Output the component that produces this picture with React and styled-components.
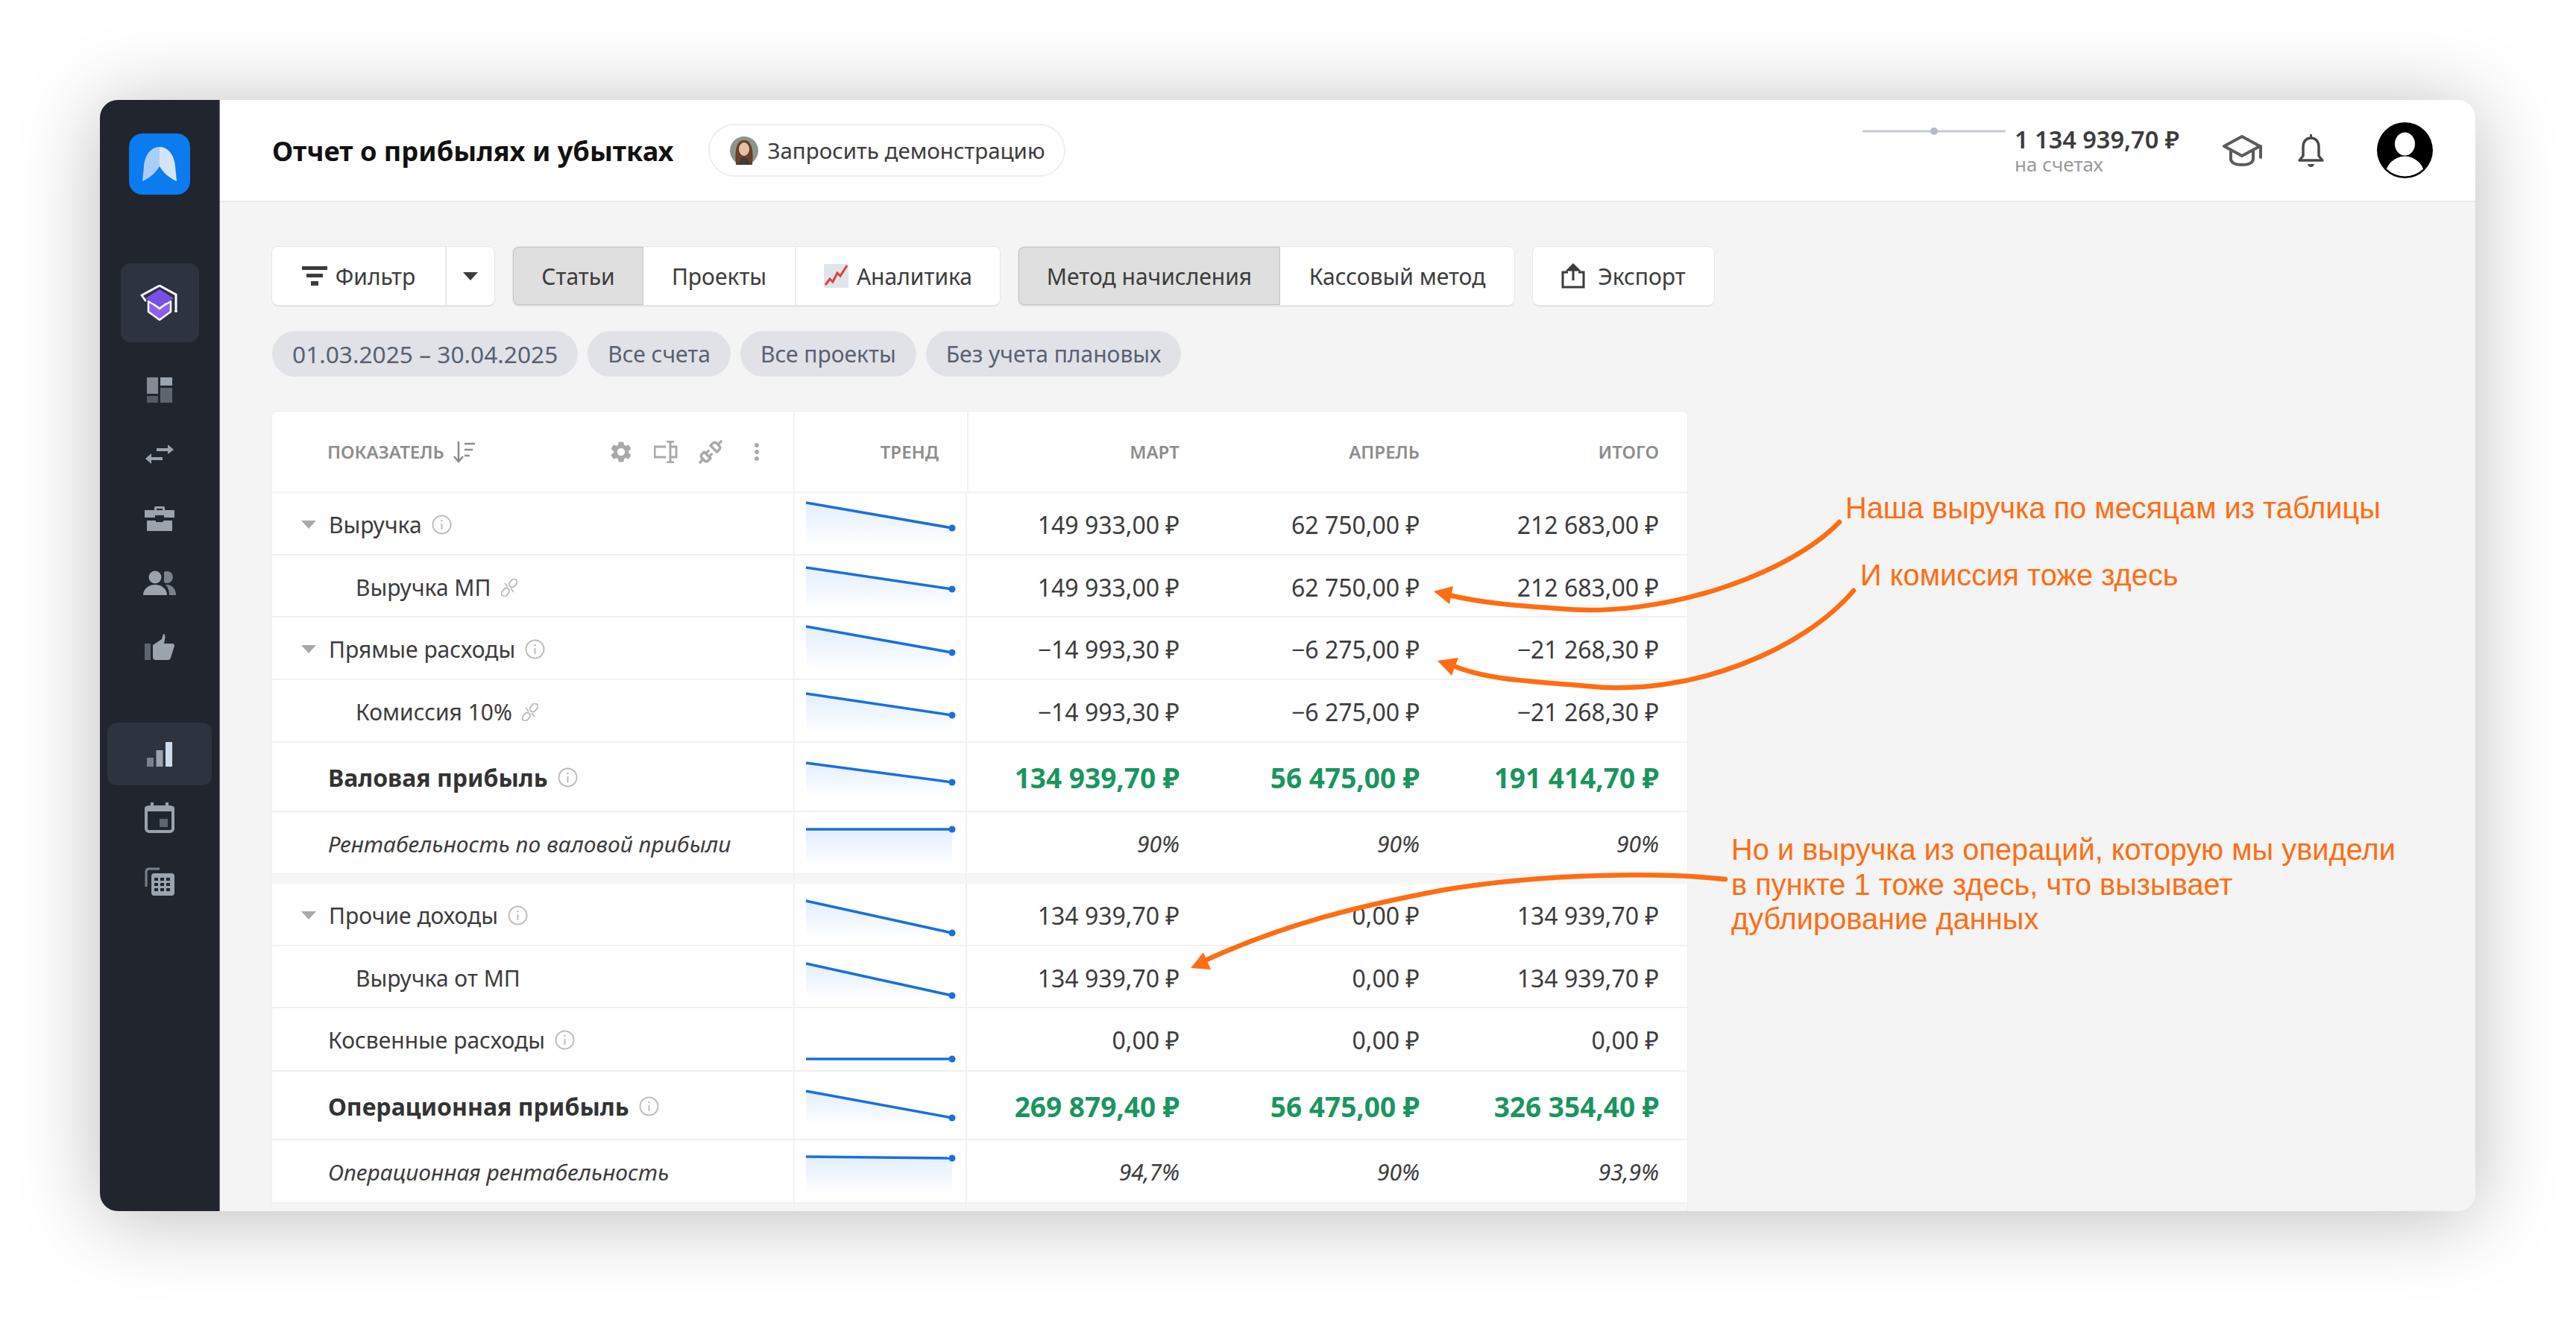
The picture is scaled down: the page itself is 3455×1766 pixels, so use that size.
import React from "react";
import styled, { createGlobalStyle } from "styled-components";
import { MdSettings, MdMoreVert } from "react-icons/md";
import { Unplug } from "lucide-react";

const GlobalStyle = createGlobalStyle`
  html, body { margin: 0; padding: 0; background: #fff; }
  body { font-family: "Noto Sans", "Open Sans", sans-serif; color: #3c3c3c; }
  * { box-sizing: border-box; }
`;

const Page = styled.div`
  position: relative;
  width: 3455px;
  height: 1766px;
  padding: 134px 135px 142px 134px;
  overflow: hidden;
  background: #fff;
`;

const Window = styled.div`
  display: flex;
  height: 100%;
  border-radius: 24px;
  overflow: hidden;
  background: #f4f4f4;
  box-shadow: 0 8px 110px rgba(0, 0, 0, 0.27);
`;

const MainColumn = styled.div`
  display: flex;
  flex: 1;
  min-width: 0;
  flex-direction: column;
`;

/* ---------- sidebar ---------- */

const Sidebar = styled.aside`
  flex: 0 0 161px;
  display: flex;
  flex-direction: column;
  align-items: center;
  padding-top: 45px;
  background: #21252d;
  border-right: 1px solid #6d727a;
`;

const LogoBox = styled.div`
  width: 82px;
  height: 82px;
  margin-bottom: 92px;
  display: flex;
  align-items: center;
  justify-content: center;
  border-radius: 18px;
  background: #0b7bf0;
`;

const LearnBox = styled.div`
  width: 105px;
  height: 106px;
  margin-bottom: 21px;
  display: flex;
  align-items: center;
  justify-content: center;
  border-radius: 13px;
  background: #2e3340;
`;

const NavItem = styled.div`
  width: 140px;
  height: ${(p) => (p.$active ? "84px" : "86px")};
  display: flex;
  align-items: center;
  justify-content: center;
  border-radius: 12px;
  background: ${(p) => (p.$active ? "#2e3340" : "transparent")};
`;

const NavSpacer = styled.div`
  height: 59px;
`;

/* ---------- header ---------- */

const Header = styled.header`
  flex: 0 0 137px;
  display: flex;
  align-items: center;
  padding: 0 57px 0 70px;
  background: #fff;
  border-bottom: 2px solid #ebebeb;
`;

const Title = styled.h1`
  margin: 0;
  font-size: 36.2px;
  font-weight: 700;
  color: #111;
  white-space: nowrap;
`;

const DemoPill = styled.div`
  width: 479px;
  height: 71px;
  margin-left: 47px;
  display: flex;
  align-items: center;
  gap: 12px;
  padding-left: 27px;
  border: 2px solid #eeeeee;
  border-radius: 36px;
  font-size: 29.5px;
  color: #3c3c3c;
  white-space: nowrap;
`;

const Balance = styled.div`
  margin-left: auto;
  display: flex;
  align-items: center;
  gap: 12px;
`;

const BalanceSpark = styled.svg`
  width: 192px;
  height: 12px;
  margin-bottom: 52px;
`;

const BalanceText = styled.div`
  width: 222px;
  display: flex;
  flex-direction: column;
`;

const BalanceValue = styled.span`
  font-size: 32.5px;
  line-height: 36px;
  font-weight: 600;
  color: #3c3c3c;
  white-space: nowrap;
`;

const BalanceNote = styled.span`
  font-size: 26px;
  line-height: 30px;
  color: #9a9a9a;
`;

const HeaderIcon = styled.div`
  margin-left: ${(p) => p.$gap}px;
  display: flex;
`;

/* ---------- content ---------- */

const Content = styled.main`
  flex: 1;
  min-height: 0;
  padding: 60px 0 0 70px;
  overflow: hidden;
`;

const Toolbar = styled.div`
  display: flex;
  gap: 25px;
`;

const BtnGroup = styled.div`
  height: 78px;
  display: flex;
  border-radius: 8px;
  background: #fff;
  box-shadow: 0 0 0 1px #e6e6e6, 0 2px 0 #dcdcdc;
`;

const Seg = styled.div`
  width: ${(p) => p.$w}px;
  display: flex;
  align-items: center;
  justify-content: center;
  gap: ${(p) => p.$gap || 11}px;
  font-size: 30px;
  color: #3c3c3c;
  white-space: nowrap;
  background: ${(p) => (p.$on ? "#dfdfdf" : "transparent")};
  border-left: ${(p) => (p.$sep ? "2px solid #eaeaea" : "none")};
  box-shadow: ${(p) => (p.$on ? "inset 0 0 0 1px #c4c4c4" : "none")};
  &:first-child { border-radius: 8px 0 0 8px; }
  &:last-child { border-radius: 0 8px 8px 0; }
`;

const Chips = styled.div`
  display: flex;
  gap: 13px;
  margin-top: 35px;
`;

const Chip = styled.div`
  height: 61px;
  display: flex;
  align-items: center;
  padding: 0 27px;
  border-radius: 31px;
  background: #e0e2e7;
  font-size: ${(p) => (p.$dates ? 31.7 : 30)}px;
  color: #596172;
  white-space: nowrap;
`;

const Card = styled.section`
  width: 1898px;
  margin-top: 47px;
  background: #fff;
  border-radius: 6px 6px 0 0;
  box-shadow: 0 0 0 1px #efefef;
`;

const TableRow = styled.div`
  display: grid;
  grid-template-columns: 699px 233px 323px 322px 321px;
  height: ${(p) => p.$h}px;
  border-bottom: 2px solid #f1f1f1;
`;

const Gap = styled.div`
  height: ${(p) => p.$h}px;
  background: #f5f6f7;
`;

const HeadName = styled.div`
  display: flex;
  align-items: center;
  gap: 12px;
  padding-left: 74px;
`;

const HeadText = styled.span`
  font-size: 24px;
  font-weight: 600;
  color: #8d8d8d;
  text-transform: uppercase;
  white-space: nowrap;
`;

const HeadTools = styled.div`
  margin-left: auto;
  display: flex;
  align-items: center;
  gap: 27px;
  padding-right: 31px;
  color: #a9a9a9;
`;

const HeadCell = styled.div`
  display: flex;
  align-items: center;
  justify-content: flex-end;
  padding-right: 38px;
  border-left: ${(p) => (p.$line ? "2px solid #f1f1f1" : "none")};
`;

const NameCell = styled.div`
  display: flex;
  align-items: center;
  padding-left: ${(p) => p.$indent}px;
  padding-bottom: ${(p) => (p.$bold ? 0 : 8)}px;
  font-size: ${(p) => (p.$bold ? 32 : 30)}px;
  font-weight: ${(p) => (p.$bold ? 700 : 400)};
  font-style: ${(p) => (p.$italic ? "italic" : "normal")};
  color: ${(p) => (p.$bold ? "#333" : "#3c3c3c")};
  white-space: nowrap;
`;

const Caret = styled.span`
  width: 0;
  height: 0;
  margin-right: ${(p) => (p.$dark ? 0 : 17)}px;
  border-left: 10px solid transparent;
  border-right: 10px solid transparent;
  border-top: 11px solid ${(p) => (p.$dark ? "#3c3c3c" : "#a9a9a9")};
`;

const InfoWrap = styled.span`
  display: flex;
  margin-left: 13px;
  color: #bdbdbd;
`;

const TrendCell = styled.div`
  border-left: 2px solid #f1f1f1;
  border-right: 2px solid #f1f1f1;
`;

const TrendSvg = styled.svg`
  display: block;
  width: 231px;
  height: 100%;
`;

const ValueCell = styled.div`
  display: flex;
  align-items: center;
  justify-content: flex-end;
  padding-right: 38px;
  padding-bottom: ${(p) => (p.$bold ? 0 : 8)}px;
  font-size: ${(p) => (p.$bold ? 37 : p.$italic ? 30 : 32)}px;
  font-weight: ${(p) => (p.$bold ? 700 : 400)};
  font-style: ${(p) => (p.$italic ? "italic" : "normal")};
  color: ${(p) => (p.$bold ? "#1a9560" : "#3c3c3c")};
  white-space: nowrap;
`;

/* ---------- annotations over the page ---------- */

const ArrowLayer = styled.svg`
  position: absolute;
  left: 0;
  top: 0;
  width: 3455px;
  height: 1766px;
  pointer-events: none;
`;

const Note = styled.div`
  position: absolute;
  left: ${(p) => p.$x}px;
  top: ${(p) => p.$y}px;
  font-family: "Liberation Sans", Arial, sans-serif;
  font-size: 39.8px;
  line-height: 46.5px;
  color: #ff6d12;
  white-space: pre;
`;

/* ---------- icons ---------- */

const LogoIcon = () => (
  <svg width="46" height="46" viewBox="0 0 46 46">
    <path d="M23 0C11 0 3 12 2 26L0 46C9 42 17 36 23 26Z" fill="#a9cdf9" />
    <path d="M23 0C35 0 43 12 44 26L46 46C37 42 29 36 23 26Z" fill="#d3e5fd" />
  </svg>
);

const LearnIcon = () => (
  <svg width="54" height="48" viewBox="0 0 54 48">
    <path d="M12 22V36L27 47L42 36V22L27 31Z" fill="#8c5ff0" stroke="#fff" strokeWidth="2.5" strokeLinejoin="round" />
    <path d="M27 6L46 18L27 30L8 18Z" fill="#7a4fe6" />
    <path d="M8 21L3 14L27 1L49 13V32" fill="none" stroke="#fff" strokeWidth="3" strokeLinejoin="round" strokeLinecap="round" />
    <path d="M19 26L27 32L36 25" fill="none" stroke="#fff" strokeWidth="2.5" />
    <circle cx="49" cy="35" r="2" fill="#fff" />
  </svg>
);

const DashIcon = () => (
  <svg width="34" height="34" viewBox="0 0 34 34">
    <rect width="15" height="22" fill="#858b95" />
    <rect x="18" width="16" height="11" fill="#9aa3ae" />
    <rect y="25" width="15" height="9" fill="#555b66" />
    <rect x="18" y="14" width="16" height="20" fill="#5f6570" />
  </svg>
);

const SwapIcon = () => (
  <svg width="38" height="30" viewBox="0 0 38 30">
    <path d="M15 7H30V2L38 9L30 15V11H15Z" fill="#9aa3ae" />
    <path d="M23 19H8V14L0 21L8 28V23H23Z" fill="#9aa3ae" />
  </svg>
);

const CaseIcon = () => (
  <svg width="40" height="34" viewBox="0 0 40 34">
    <path d="M13 6V3Q13 1 15 1H25Q27 1 27 3V6H24V4H16V6Z" fill="#9aa3ae" />
    <path d="M0 6H40V16H26V13H14V16H0Z" fill="#9aa3ae" />
    <path d="M3 20H15V22H25V20H37V34H3Z" fill="#9aa3ae" />
  </svg>
);

const PeopleIcon = () => (
  <svg width="44" height="33" viewBox="0 0 44 33">
    <path d="M28 2A8 8 0 1 1 28 16Z" fill="#7c828c" />
    <path d="M32 19C38 19 44 24 44 33H35C35 27 33 22 30 19Z" fill="#7c828c" />
    <circle cx="16" cy="9" r="8.5" fill="#9aa3ae" />
    <path d="M0 33C0 25 7 19 16 19C25 19 32 25 32 33Z" fill="#9aa3ae" />
  </svg>
);

const ThumbIcon = () => (
  <svg width="40" height="35" viewBox="0 0 40 35">
    <rect y="13" width="8" height="22" fill="#5f6570" />
    <path d="M11 15L23 7L25 0L27 1Q28 2 27 8L26 13H37Q40 13 40 16L35 32Q34 35 31 35H15Q11 35 11 31Z" fill="#9aa3ae" />
  </svg>
);

const BarsIcon = () => (
  <svg width="34" height="33" viewBox="0 0 34 33">
    <rect y="21" width="9" height="12" fill="#7c828c" />
    <rect x="12.5" y="11" width="9" height="22" fill="#9aa3ae" />
    <rect x="25" width="9" height="33" fill="#cfdcec" />
  </svg>
);

const CalendarIcon = () => (
  <svg width="40" height="42" viewBox="0 0 40 42">
    <rect x="2" y="7" width="36" height="33" rx="4" fill="none" stroke="#9aa3ae" strokeWidth="4" />
    <rect y="6" width="40" height="7" rx="3" fill="#9aa3ae" />
    <rect x="8" y="1" width="4" height="8" fill="#9aa3ae" />
    <rect x="28" y="1" width="4" height="8" fill="#9aa3ae" />
    <rect x="20" y="23" width="11" height="11" fill="#5f6570" />
  </svg>
);

const CalcIcon = () => (
  <svg width="40" height="38" viewBox="0 0 40 38">
    <path d="M2 26V6Q2 2 6 2H20" fill="none" stroke="#7c828c" strokeWidth="3" />
    <rect x="9" y="8" width="31" height="30" rx="4" fill="#9aa3ae" />
    {[14, 21, 28].map((y) =>
      [13, 21, 29].map((x) => <rect key={x + "-" + y} x={x} y={y} width="5" height="4" fill="#21252d" />)
    )}
  </svg>
);

const DemoAvatar = () => (
  <svg width="38" height="38" viewBox="0 0 38 38">
    <circle cx="19" cy="19" r="19" fill="#8d9488" />
    <path d="M8 38C6 18 9 5 19 5C29 5 32 18 30 38Z" fill="#6c3f26" />
    <ellipse cx="19" cy="17" rx="7" ry="9" fill="#e7bfa4" />
    <path d="M11 38Q14 28 19 28Q24 28 27 38Z" fill="#3d3a3a" />
  </svg>
);

const CapIcon = () => (
  <svg width="54" height="42" viewBox="0 0 54 42" fill="none" stroke="#5c5c5c" strokeWidth="4" strokeLinejoin="round" strokeLinecap="round">
    <path d="M26 2L2 15L26 28L50 15Z" />
    <path d="M11 21V33Q13 40 26 40Q39 40 41 33V21" />
    <path d="M51 15V30" />
  </svg>
);

const BellIcon = () => (
  <svg width="37" height="46" viewBox="0 0 37 46" fill="none" stroke="#4a4a4a" strokeWidth="3.5" strokeLinejoin="round">
    <path d="M18.5 6C12 6 8 11 8 18V30L3 36H34L29 30V18C29 11 25 6 18.5 6Z" />
    <rect x="17" y="1" width="3" height="5" fill="#4a4a4a" stroke="none" />
    <path d="M14 41H23Q22 45 18.5 45Q15 45 14 41Z" fill="#4a4a4a" stroke="none" />
  </svg>
);

const UserAvatar = () => (
  <svg width="75" height="75" viewBox="0 0 75 75">
    <defs>
      <clipPath id="avatarClip">
        <circle cx="37.5" cy="37.5" r="35" />
      </clipPath>
    </defs>
    <circle cx="37.5" cy="37.5" r="37.5" fill="#000" />
    <ellipse cx="37.5" cy="29" rx="13.5" ry="15.5" fill="#fff" />
    <ellipse cx="37.5" cy="74" rx="27" ry="28.5" fill="#fff" clipPath="url(#avatarClip)" />
  </svg>
);

const FilterIcon = () => (
  <svg width="34" height="27" viewBox="0 0 34 27" fill="#3c3c3c">
    <rect width="34" height="5" />
    <rect x="6" y="10" width="22" height="5" />
    <rect x="12" y="20" width="10" height="6" />
  </svg>
);

const ChartEmoji = () => (
  <svg width="33" height="32" viewBox="0 0 33 32">
    <rect width="33" height="32" rx="2" fill="#dfe6ea" />
    <path d="M2 28L8 20L12 24L18 12L22 16L31 2" fill="none" stroke="#e0413f" strokeWidth="3" />
  </svg>
);

const ExportIcon = () => (
  <svg width="32" height="34" viewBox="0 0 32 34" fill="none" stroke="#3c3c3c" strokeWidth="3">
    <path d="M9 12H2V32H30V12H23" />
    <path d="M16 23V3" />
    <path d="M9 9L16 2L23 9Z" fill="#3c3c3c" />
  </svg>
);

const SortIcon = () => (
  <svg width="30" height="30" viewBox="0 0 30 30" fill="none" stroke="#8d8d8d" strokeWidth="2.5">
    <path d="M7 1V26" />
    <path d="M1 21L7 28L13 21" />
    <path d="M15 4H29M15 12H26M15 20H22" />
  </svg>
);

const ColumnsIcon = () => (
  <svg width="32" height="30" viewBox="0 0 32 30" fill="none" stroke="#a9a9a9" strokeWidth="3">
    <path d="M16 8H1V22H16" />
    <path d="M22 8H30V22H22" />
    <path d="M22 1V29M17 1H27M17 29H27" />
  </svg>
);

const InfoIcon = () => (
  <svg width="27" height="27" viewBox="0 0 27 27" fill="none" stroke="currentColor" strokeWidth="2">
    <circle cx="13.5" cy="13.5" r="12" />
    <path d="M13.5 12V20" strokeWidth="2" />
    <circle cx="13.5" cy="8" r="1.3" fill="currentColor" stroke="none" />
  </svg>
);

const BrokenLinkIcon = () => (
  <svg width="22" height="24" viewBox="0 0 22 24" fill="none" stroke="currentColor" strokeWidth="2">
    <g transform="rotate(-50 11 12)">
      <rect x="-3" y="8" width="12" height="8" rx="4" />
      <rect x="13" y="8" width="12" height="8" rx="4" />
    </g>
    <path d="M5 6L9 11M13 13L17 18" />
  </svg>
);

const Trend = ({ from, to, fill = true, id }) => (
  <TrendSvg viewBox="0 0 231 93" preserveAspectRatio="xMinYMin slice">
    <defs>
      <linearGradient id={id} x1="0" y1="0" x2="0" y2="1">
        <stop offset="0" stopColor="#e3eefd" />
        <stop offset="1" stopColor="#ffffff" />
      </linearGradient>
    </defs>
    {fill && <polygon points={`15,${from} 211,${to} 211,72 15,72`} fill={`url(#${id})`} />}
    <line x1="15" y1={from} x2="211" y2={to} stroke="#1a6fdc" strokeWidth="3.5" />
    <circle cx="211" cy={to} r="4.5" fill="#1a6fdc" />
  </TrendSvg>
);

const rows = [
  { name: "Выручка", caret: true, info: true, h: 84, t: [13, 47], v: ["149 933,00 ₽", "62 750,00 ₽", "212 683,00 ₽"] },
  { name: "Выручка МП", child: true, link: true, h: 83, t: [16, 45], v: ["149 933,00 ₽", "62 750,00 ₽", "212 683,00 ₽"] },
  { name: "Прямые расходы", caret: true, info: true, h: 84, t: [12, 47], v: ["−14 993,30 ₽", "−6 275,00 ₽", "−21 268,30 ₽"] },
  { name: "Комиссия 10%", child: true, link: true, h: 84, t: [18, 47], v: ["−14 993,30 ₽", "−6 275,00 ₽", "−21 268,30 ₽"] },
  { name: "Валовая прибыль", bold: true, info: true, h: 93, t: [27, 53], v: ["134 939,70 ₽", "56 475,00 ₽", "191 414,70 ₽"] },
  { name: "Рентабельность по валовой прибыли", italic: true, h: 84, t: [23, 23], v: ["90%", "90%", "90%"] },
  { gap: 12 },
  { name: "Прочие доходы", caret: true, info: true, h: 84, t: [23, 66], v: ["134 939,70 ₽", "0,00 ₽", "134 939,70 ₽"] },
  { name: "Выручка от МП", child: true, h: 83, t: [23, 66], v: ["134 939,70 ₽", "0,00 ₽", "134 939,70 ₽"] },
  { name: "Косвенные расходы", info: true, h: 85, t: [68, 68], noFill: true, v: ["0,00 ₽", "0,00 ₽", "0,00 ₽"] },
  { name: "Операционная прибыль", bold: true, info: true, h: 92, t: [26, 62], v: ["269 879,40 ₽", "56 475,00 ₽", "326 354,40 ₽"] },
  { name: "Операционная рентабельность", italic: true, h: 85, t: [22, 24], v: ["94,7%", "90%", "93,9%"] },
  { gap: 12 },
];

const indentFor = (r) => (r.child ? 112 : r.caret ? 39 : 75);

const App = () => (
  <Page>
    <GlobalStyle />
    <Window>
      <Sidebar>
        <LogoBox><LogoIcon /></LogoBox>
        <LearnBox><LearnIcon /></LearnBox>
        <NavItem><DashIcon /></NavItem>
        <NavItem><SwapIcon /></NavItem>
        <NavItem><CaseIcon /></NavItem>
        <NavItem><PeopleIcon /></NavItem>
        <NavItem><ThumbIcon /></NavItem>
        <NavSpacer />
        <NavItem $active><BarsIcon /></NavItem>
        <NavItem><CalendarIcon /></NavItem>
        <NavItem><CalcIcon /></NavItem>
      </Sidebar>
      <MainColumn>
        <Header>
          <Title>Отчет о прибылях и убытках</Title>
          <DemoPill><DemoAvatar />Запросить демонстрацию</DemoPill>
          <Balance>
            <BalanceSpark viewBox="0 0 192 12">
              <line x1="0" y1="6" x2="192" y2="6" stroke="#c6cad3" strokeWidth="3" />
              <circle cx="96" cy="6" r="5" fill="#b4bac6" />
            </BalanceSpark>
            <BalanceText>
              <BalanceValue>1 134 939,70 ₽</BalanceValue>
              <BalanceNote>на счетах</BalanceNote>
            </BalanceText>
          </Balance>
          <HeaderIcon $gap={57}><CapIcon /></HeaderIcon>
          <HeaderIcon $gap={46}><BellIcon /></HeaderIcon>
          <HeaderIcon $gap={70}><UserAvatar /></HeaderIcon>
        </Header>
        <Content>
          <Toolbar>
            <BtnGroup>
              <Seg $w={232}><FilterIcon />Фильтр</Seg>
              <Seg $w={66} $sep><Caret $dark /></Seg>
            </BtnGroup>
            <BtnGroup>
              <Seg $w={175} $on>Статьи</Seg>
              <Seg $w={203}>Проекты</Seg>
              <Seg $w={275} $sep><ChartEmoji />Аналитика</Seg>
            </BtnGroup>
            <BtnGroup>
              <Seg $w={351} $on>Метод начисления</Seg>
              <Seg $w={314}>Кассовый метод</Seg>
            </BtnGroup>
            <BtnGroup>
              <Seg $w={243} $gap={17}><ExportIcon />Экспорт</Seg>
            </BtnGroup>
          </Toolbar>
          <Chips>
            <Chip $dates>01.03.2025 – 30.04.2025</Chip>
            <Chip>Все счета</Chip>
            <Chip>Все проекты</Chip>
            <Chip>Без учета плановых</Chip>
          </Chips>
          <Card>
            <TableRow $h={109}>
              <HeadName>
                <HeadText>Показатель</HeadText>
                <SortIcon />
                <HeadTools>
                  <MdSettings size={34} />
                  <ColumnsIcon />
                  <Unplug size={34} strokeWidth={2.4} />
                  <MdMoreVert size={36} />
                </HeadTools>
              </HeadName>
              <HeadCell $line><HeadText>Тренд</HeadText></HeadCell>
              <HeadCell $line><HeadText>Март</HeadText></HeadCell>
              <HeadCell><HeadText>Апрель</HeadText></HeadCell>
              <HeadCell><HeadText>Итого</HeadText></HeadCell>
            </TableRow>
            {rows.map((r, i) =>
              r.gap ? (
                <Gap key={i} $h={r.gap} />
              ) : (
                <TableRow key={r.name} $h={r.h}>
                  <NameCell $indent={indentFor(r)} $bold={r.bold} $italic={r.italic}>
                    {r.caret && <Caret />}
                    {r.name}
                    {r.info && <InfoWrap><InfoIcon /></InfoWrap>}
                    {r.link && <InfoWrap><BrokenLinkIcon /></InfoWrap>}
                  </NameCell>
                  <TrendCell>
                    <Trend id={"fade" + i} from={r.t[0]} to={r.t[1]} fill={!r.noFill} />
                  </TrendCell>
                  {r.v.map((val, j) => (
                    <ValueCell key={j} $bold={r.bold} $italic={r.italic}>{val}</ValueCell>
                  ))}
                </TableRow>
              )
            )}
          </Card>
        </Content>
      </MainColumn>
    </Window>

    <ArrowLayer viewBox="0 0 3455 1766">
      <g fill="none" stroke="#ff6d12" strokeWidth="6.5" strokeLinecap="round">
        <path d="M2467 700C2400 770 2230 830 2090 816C2030 812 1985 808 1944 798" />
        <path d="M2486 792C2420 870 2270 935 2129 920C2060 914 1995 912 1950 893" />
        <path d="M2314 1179C2230 1170 2080 1170 1938 1193C1820 1215 1720 1240 1614 1289" />
      </g>
      <g fill="#ff6d12">
        <polygon points="1923,793 1949,786 1944,810" />
        <polygon points="1928,886 1956,882 1947,906" />
        <polygon points="1597,1298 1614,1277 1624,1300" />
      </g>
    </ArrowLayer>
    <Note $x={2475} $y={658}>Наша выручка по месяцам из таблицы</Note>
    <Note $x={2495} $y={748}>И комиссия тоже здесь</Note>
    <Note $x={2322} $y={1116}>{"Но и выручка из операций, которую мы увидели\nв пункте 1 тоже здесь, что вызывает\nдублирование данных"}</Note>
  </Page>
);

export default App;
